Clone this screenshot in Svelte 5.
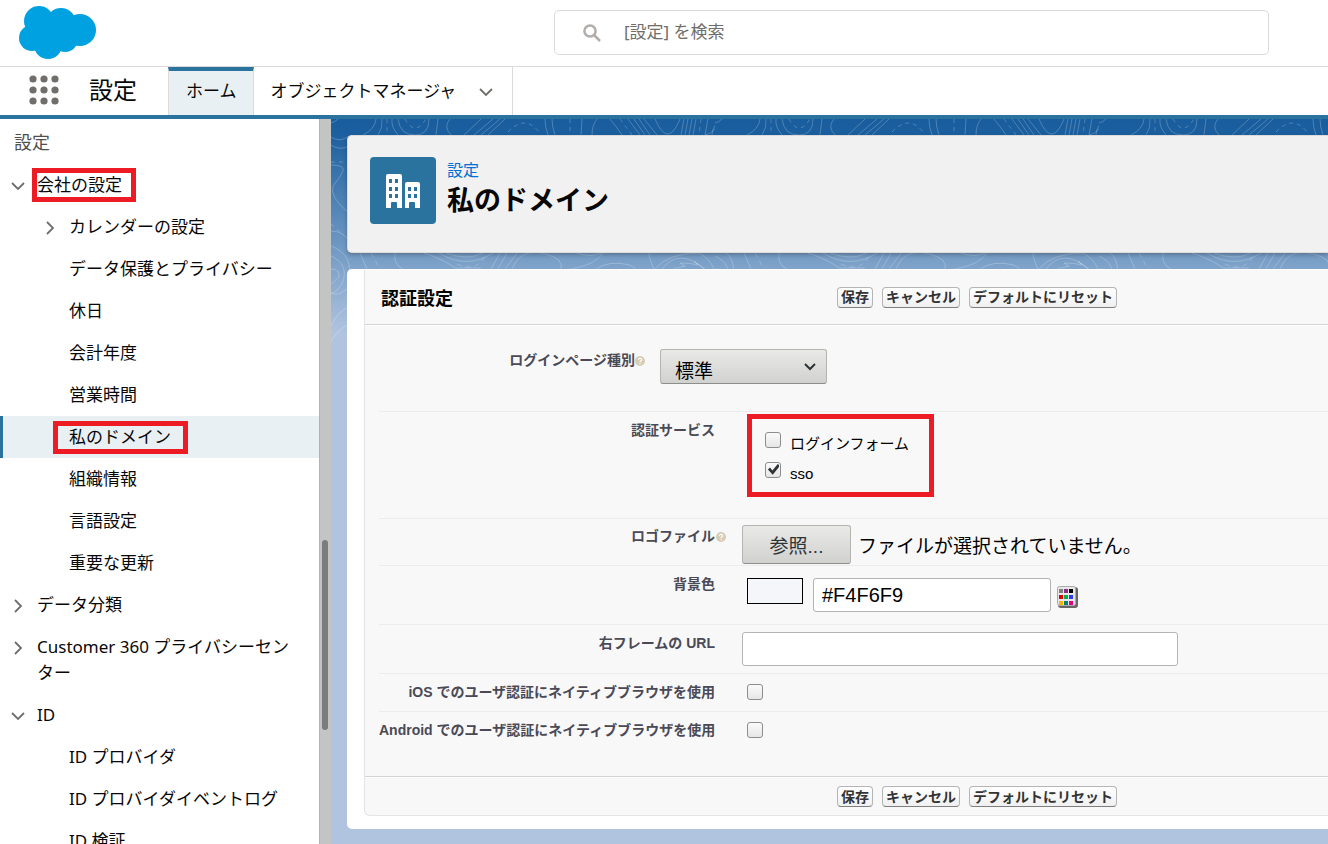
<script lang="ts">
  type NavItem = {
    label: string;
    level: 1 | 2;
    state?: 'open' | 'closed';
    current?: boolean;
    marked?: boolean;
  };

  const navItems: NavItem[] = [
    { label: '会社の設定', level: 1, state: 'open', marked: true },
    { label: 'カレンダーの設定', level: 2, state: 'closed' },
    { label: 'データ保護とプライバシー', level: 2 },
    { label: '休日', level: 2 },
    { label: '会計年度', level: 2 },
    { label: '営業時間', level: 2 },
    { label: '私のドメイン', level: 2, current: true, marked: true },
    { label: '組織情報', level: 2 },
    { label: '言語設定', level: 2 },
    { label: '重要な更新', level: 2 },
    { label: 'データ分類', level: 1, state: 'closed' },
    { label: 'Customer 360 プライバシーセンター', level: 1, state: 'closed' },
    { label: 'ID', level: 1, state: 'open' },
    { label: 'ID プロバイダ', level: 2 },
    { label: 'ID プロバイダイベントログ', level: 2 },
    { label: 'ID 検証', level: 2 },
  ];

  const dots = [5, 16, 27];
  const swatches = ['#808080', '#8b2a8b', '#000', '#e00000', '#00b050', '#2a3cff', '#ffb000', '#008080', '#e6007e'];

  let loginForm = $state(false);
  let sso = $state(true);
  let iosNative = $state(false);
  let androidNative = $state(false);
  let background = $state('#F4F6F9');
  let frameUrl = $state('');
</script>

{#snippet chevron(open: boolean)}
  <svg class="chevron" width="16" height="16" viewBox="0 0 16 16" aria-hidden="true">
    <path d={open ? 'M2 5l6 6 6-6' : 'M5 2l6 6-6 6'} />
  </svg>
{/snippet}

{#snippet help()}
  <svg class="help" width="10" height="10" viewBox="0 0 10 10" aria-hidden="true">
    <circle cx="5" cy="5" r="5" fill="#d8ccb4" />
    <path d="M3.4 3.8a1.6 1.4 0 1 1 2.4 1.2Q5 5.4 5 6.2M5 7.2v1" fill="none" stroke="#fff" stroke-width="1.2" />
  </svg>
{/snippet}

{#snippet actions()}
  <div class="actions">
    <button type="button">保存</button>
    <button type="button">キャンセル</button>
    <button type="button">デフォルトにリセット</button>
  </div>
{/snippet}

<div class="app">
  <header class="top">
    <svg class="logo" width="78" height="54" viewBox="0 0 78 54" aria-label="Salesforce">
      <g fill="#00a1e0">
        <circle cx="20" cy="15" r="15" />
        <circle cx="42" cy="17" r="15" />
        <circle cx="61" cy="24" r="16" />
        <circle cx="13" cy="32" r="13" />
        <circle cx="29" cy="39" r="14" />
        <circle cx="46" cy="33" r="13" />
        <path d="M12 18h42v18H12z" />
      </g>
    </svg>
    <label class="search">
      <svg width="18" height="18" viewBox="0 0 18 18" aria-hidden="true">
        <circle cx="7" cy="7" r="5.6" />
        <path d="M11 11l6 6" />
      </svg>
      <input type="search" placeholder="[設定] を検索" aria-label="[設定] を検索" />
    </label>
  </header>

  <nav class="bar">
    <button class="launcher" type="button" aria-label="アプリケーションランチャー">
      <svg width="32" height="32" viewBox="0 0 32 32">
        {#each dots as cy}
          {#each dots as cx}
            <circle {cx} {cy} r="3.6" />
          {/each}
        {/each}
      </svg>
    </button>
    <span class="app-name">設定</span>
    <a class="tab active" href="#home">ホーム</a>
    <a class="tab" href="#objects">オブジェクトマネージャ {@render chevron(true)}</a>
  </nav>

  <div class="body">
    <aside>
      <h2>設定</h2>
      <ul>
        {#each navItems as item}
          <li class:sub={item.level === 2} class:current={item.current}>
            <span class="toggle">
              {#if item.state}{@render chevron(item.state === 'open')}{/if}
            </span>
            <a href="#setup" class:marked={item.marked}>{item.label}</a>
          </li>
        {/each}
      </ul>
    </aside>
    <div class="track"><div class="thumb"></div></div>

    <main>
      <svg class="topography" width="100%" height="230" aria-hidden="true">
        <defs>
          <pattern id="contours" width="384" height="230" patternUnits="userSpaceOnUse">
            <g fill="none" stroke="#fff" stroke-opacity=".22">
              <path d="M0 4Q4 3 7 0M45 0Q44 10 32 16M51 0Q52 9 47 16M61 0Q60 8 67 16M67 0Q69 16 84 16Q98 16 98 0M107 0L105 16M119 0Q112 8 120 16" />
              <path d="M150 0L133 16M162 0L143 16M169 0L150 16M174 0L157 16M214 0Q214 8 217 16M221 0Q221 8 224 16M251 0L250 16M266 0Q261 6 261 16" />
              <path d="M279 0Q285 7 291 16M297 0L309 16M303 0L314 16M308 0L319 16M313 0L326 16M324 0Q337 30 349 0M353 0L350 16M357 0L354 16M361 0L358 16M365 0L362 16M377 0L374 16M392 0Q381 6 381 16M384 10Q380 15 374 16" />
              <path stroke-dasharray="4 4" d="M56 0V16M74 0Q84 18 95 0M177 13Q194-5 208 13M239 0V16M289 0L301 16M370 0L368 16" />
              <path d="M0 18Q9 24 18 17M0 26Q9 32 18 27M0 46Q14 46 12 52Q8 60 2 67Q-2 78 18 94M0 112Q12 112 18 122M0 127Q24 136 17 163M0 137Q19 146 11 165Q6 173 0 175M0 150Q9 150 8 158L0 165M18 168Q8 178 0 174M18 188Q8 191 0 207M18 205Q8 210 0 222" />
              <path stroke-dasharray="4 4" d="M0 43H18M0 105L12 116" />
              <path d="M29 134L36 150M64 134Q62 145 72 150M93 134Q112 140 124 149H150M108 134Q136 151 162 134M115 134Q137 142 152 134M169 134L160 150M176 134L167 150M186 134L174 150M181 150Q190 128 215 135Q233 140 230 150" />
              <path d="M240 150Q264 146 272 134M246 134Q260 139 270 134M265 150Q278 141 299 146L305 150M318 134Q318 140 323 150M324 150Q337 134 368 134Q379 140 383 150M331 150Q348 128 373 150" />
              <path d="M342 150l12-3-5-3q12 0 18 2l-4-4 11 8" />
              <path stroke-dasharray="5 4" d="M40 134L49 150M126 145Q145 154 154 137" />
            </g>
          </pattern>
        </defs>
        <rect width="100%" height="230" fill="url(#contours)" />
      </svg>

      <section class="page-head">
        <svg class="page-icon" width="66" height="67" viewBox="0 0 66 67" aria-hidden="true">
          <rect width="66" height="67" rx="4" fill="#2a739e" />
          <path fill="#fff" d="M18 17h12q2 0 2 2v32h-5v-5q0-1-1-1h-4q-1 0-1 1v5h-5V19q0-2 2-2zM37 25h11q2 0 2 2v24h-5v-5q0-1-1-1h-4q-1 0-1 1v5h-4V27q0-2 2-2z" />
          <path fill="#2a739e" d="M19 22h3v4h-3zM25 22h3v4h-3zM19 30h3v4h-3zM25 30h3v4h-3zM19 37h3v4h-3zM25 37h3v4h-3zM38 30h3v4h-3zM44 30h3v4h-3zM38 37h3v4h-3zM44 37h3v4h-3z" />
        </svg>
        <div>
          <a href="#setup">設定</a>
          <h1>私のドメイン</h1>
        </div>
      </section>

      <section class="panel">
        <form class="block">
          <div class="block-head">
            <h3>認証設定</h3>
            {@render actions()}
          </div>
          <div class="fields">
            <div class="row type">
              <div class="name"><label for="page-type">ログインページ種別</label>{@render help()}</div>
              <div class="select">
                <select id="page-type"><option>標準</option></select>
                <svg width="12" height="8" viewBox="0 0 12 8" aria-hidden="true"><path d="M1 1l5 5 5-5" /></svg>
              </div>
            </div>
            <div class="row services">
              <div class="name" id="services">認証サービス</div>
              <div class="checks" role="group" aria-labelledby="services">
                <label><input type="checkbox" bind:checked={loginForm} />ログインフォーム</label>
                <label><input type="checkbox" bind:checked={sso} />sso</label>
              </div>
            </div>
            <div class="row logo-file">
              <div class="name" id="logo-file">ロゴファイル<span class="hint">{@render help()}</span></div>
              <div class="value">
                <button type="button" class="browse" aria-describedby="logo-file">参照...</button>
                <span class="file">ファイルが選択されていません。</span>
              </div>
            </div>
            <div class="row color">
              <div class="name"><label for="background">背景色</label></div>
              <div class="value">
                <span class="swatch" style="background: {background}"></span>
                <input id="background" type="text" bind:value={background} />
                <button type="button" class="picker" aria-label="色を選択">
                  <svg width="21" height="22" viewBox="0 0 21 22">
                    <rect x="1" y="1" width="20" height="21" rx="3" fill="#666" />
                    <rect x=".5" y=".5" width="18" height="19" rx="2" fill="#e8e8e8" stroke="#aaa" />
                    {#each swatches as fill, i}
                      <rect x={2 + (i % 3) * 5} y={3 + Math.floor(i / 3) * 6} width="4" height="4" {fill} />
                    {/each}
                  </svg>
                </button>
              </div>
            </div>
            <div class="row url">
              <div class="name"><label for="frame-url">右フレームの URL</label></div>
              <div class="value"><input id="frame-url" type="text" bind:value={frameUrl} /></div>
            </div>
            <div class="row ios">
              <div class="name"><label for="ios">iOS でのユーザ認証にネイティブブラウザを使用</label></div>
              <div class="value"><input id="ios" type="checkbox" bind:checked={iosNative} /></div>
            </div>
            <div class="row android">
              <div class="name"><label for="android">Android でのユーザ認証にネイティブブラウザを使用</label></div>
              <div class="value"><input id="android" type="checkbox" bind:checked={androidNative} /></div>
            </div>
          </div>
          <div class="block-foot">{@render actions()}</div>
        </form>
      </section>
    </main>
  </div>
</div>

<style>
  :global(body) {
    margin: 0;
  }
  .app {
    height: 100vh;
    display: flex;
    flex-direction: column;
    overflow: hidden;
    background: #fff;
    color: #080707;
    font-family: 'Noto Sans', 'Noto Sans CJK JP', sans-serif;
    font-size: 17px;
  }
  .app * {
    box-sizing: border-box;
  }
  a {
    color: inherit;
    text-decoration: none;
  }
  button,
  input,
  select {
    margin: 0;
    font: inherit;
    color: inherit;
  }
  button {
    cursor: pointer;
  }
  .chevron {
    display: block;
    flex: none;
    fill: none;
    stroke: #706e6b;
    stroke-width: 1.8;
  }

  .top {
    flex: none;
    display: flex;
    align-items: flex-start;
    justify-content: space-between;
    height: 67px;
    padding: 0 59px 0 19px;
    border-bottom: 1px solid #dddbda;
  }
  .logo {
    flex: none;
    margin-top: 6px;
  }
  .search {
    flex: 0 1 715px;
    display: flex;
    align-items: center;
    height: 45px;
    margin-top: 10px;
    padding: 0 28px;
    border: 1px solid #dddbda;
    border-radius: 5px;
  }
  .search svg {
    flex: none;
    fill: none;
    stroke: #b0adab;
    stroke-width: 2.5;
  }
  .search input {
    flex: 1;
    min-width: 0;
    height: 40px;
    margin: 0 0 2px 23px;
    padding: 0;
    border: 0;
    outline: 0;
    background: none;
  }
  .search input::placeholder {
    color: #706e6b;
    opacity: 1;
  }

  .bar {
    flex: none;
    display: flex;
    height: 52px;
    border-bottom: 4px solid #2a739e;
  }
  .launcher {
    display: flex;
    align-items: flex-start;
    width: 89px;
    padding: 7px 0 0 28px;
    border: 0;
    background: none;
  }
  .launcher svg {
    fill: #706e6b;
  }
  .app-name {
    width: 79px;
    font-size: 24px;
    line-height: 46px;
  }
  .tab {
    display: flex;
    align-items: center;
    padding: 0 16px 0 17px;
    border-right: 1px solid #dddbda;
    line-height: 46px;
  }
  .tab.active {
    border-top: 4px solid #2a739e;
    border-left: 1px solid #dddbda;
    background: #e8f0f3;
    line-height: 40px;
    align-items: flex-start;
  }
  .tab .chevron {
    margin: 2px 2px 0 22px;
  }

  .body {
    flex: 1;
    min-height: 0;
    display: flex;
  }
  aside {
    flex: 0 0 319px;
    overflow: hidden;
  }
  aside h2 {
    height: 45px;
    margin: 0;
    padding-left: 14px;
    color: #514f4d;
    font-size: 18px;
    font-weight: 400;
    line-height: 47px;
  }
  aside ul {
    margin: 0;
    padding: 0;
    list-style: none;
  }
  aside li {
    display: flex;
    align-items: flex-start;
    padding: 8px 20px 8px 7px;
    border-left: 3px solid transparent;
    line-height: 26px;
  }
  aside li.sub {
    padding-left: 39px;
  }
  aside li.current {
    border-color: #2a739e;
    background: #e8f0f3;
  }
  .toggle {
    flex: 0 0 27px;
    padding-top: 6px;
  }
  aside a {
    position: relative;
  }
  /* callout frame around a menu entry */
  aside a.marked::after {
    content: '';
    position: absolute;
    inset: -4px -14px -4px -5px;
    border: 5px solid #ed1c24;
  }
  .sub a.marked::after {
    inset: -3px -17px -4px -16px;
  }
  .track {
    flex: 0 0 12px;
    position: relative;
    border-left: 1px solid #b0b3b2;
    background: #c2c5c4;
  }
  .thumb {
    position: absolute;
    top: 58%;
    left: 2px;
    width: 6px;
    height: 190px;
    border-radius: 3px;
    background: #7b7c7c;
  }

  main {
    flex: 1;
    min-width: 0;
    position: relative;
    padding: 16px 0 0 16px;
    overflow: hidden;
    background: #b0c4df linear-gradient(#195d9e, #1b5f9f 14px, #b0c4df 214px) no-repeat 0 0 / 100% 214px;
  }
  .topography {
    position: absolute;
    top: 0;
    left: 0;
  }
  .page-head {
    position: relative;
    display: flex;
    align-items: flex-start;
    gap: 11px;
    height: 118px;
    padding: 21px 22px;
    border: 1px solid #dddbda;
    border-right: 0;
    border-radius: 5px 0 0 5px;
    background: #f1f1f1;
    box-shadow: 0 2px 4px rgba(0, 0, 0, 0.25);
  }
  .page-icon {
    flex: none;
  }
  .page-head a {
    display: block;
    color: #0070d2;
    font-size: 16px;
    line-height: 26px;
  }
  h1 {
    margin: 0;
    font-size: 27px;
    font-weight: 700;
    line-height: 34px;
  }
  .panel {
    position: relative;
    margin-top: 16px;
    padding: 1px 0 13px 17px;
    border-radius: 5px 0 0 5px;
    background: #fff;
  }
  .block {
    border: solid #e4e4e4;
    border-width: 0 0 1px 1px;
    border-radius: 0 0 0 6px;
    background: #f8f8f8;
    color: #000;
    font-family: 'Liberation Sans', 'Noto Sans CJK JP', sans-serif;
  }
  .block-head {
    display: flex;
    align-items: center;
    height: 55px;
    padding-left: 16px;
    border-bottom: 1px solid #d4d4d4;
  }
  h3 {
    flex: 0 0 456px;
    margin: 0;
    padding-top: 4px;
    font-size: 18px;
    line-height: 26px;
  }
  .actions {
    display: flex;
    gap: 9px;
  }
  .actions button {
    height: 21px;
    padding: 0 3px;
    border: 1px solid #b5b5b5;
    border-bottom-color: #7f7f7f;
    border-radius: 4px;
    background: linear-gradient(#fff, #f0f0f0);
    color: #333;
    font-size: 14px;
    font-weight: 700;
    line-height: 18px;
    white-space: nowrap;
  }
  .block-foot {
    height: 39px;
    padding: 9px 0 0 472px;
    border-top: 1px solid #d4d4d4;
    box-shadow: inset 0 1px #fff;
  }

  .fields {
    padding: 0 0 26px 14px;
    box-shadow: inset 0 1px #fff;
  }
  .row {
    display: flex;
    align-items: flex-start;
    border-top: 1px solid #ececec;
  }
  .name {
    flex: 0 0 336px;
    color: #4a4a56;
    font-size: 14px;
    font-weight: 700;
    line-height: 20px;
    text-align: right;
    white-space: nowrap;
  }
  .value {
    display: flex;
    align-items: flex-start;
    margin-left: 27px;
  }
  .help {
    vertical-align: -1px;
  }
  .hint {
    position: absolute;
    margin-left: 1px;
  }
  .row.type {
    height: 86px;
    padding-top: 24px;
    border-top: 0;
  }
  .type .name {
    flex-basis: 266px;
    padding-top: 1px;
  }
  .select {
    position: relative;
    margin-left: 15px;
  }
  select {
    display: block;
    width: 167px;
    height: 35px;
    padding: 8px 14px 0;
    appearance: none;
    border: 1px solid #b4b4b0;
    border-bottom-color: #8b8e8b;
    border-radius: 3px;
    background: linear-gradient(#e9e9e7, #d1d1cf);
    font-size: 19px;
    line-height: 28px;
  }
  .select svg {
    position: absolute;
    top: 14px;
    right: 11px;
    fill: none;
    stroke: #2e3436;
    stroke-width: 2;
    pointer-events: none;
  }
  .services {
    height: 107px;
    padding-top: 2px;
  }
  .services .name {
    padding-top: 6px;
  }
  .checks {
    display: flex;
    flex-direction: column;
    gap: 8px;
    height: 83px;
    margin-left: 32px;
    padding: 13px 20px 0 13px;
    border: 5px solid #ed1c24;
    font-size: 15px;
    line-height: 20px;
  }
  .checks label {
    display: flex;
    align-items: flex-end;
    gap: 9px;
    height: 22px;
    white-space: nowrap;
  }
  .checks input {
    align-self: flex-start;
  }
  input[type='checkbox'] {
    flex: none;
    display: block;
    width: 16px;
    height: 16px;
    appearance: none;
    border: 1px solid #8b8e8b;
    border-radius: 3px;
    background: linear-gradient(#fbfbfb, #e6e6e6);
  }
  input[type='checkbox']:checked::before {
    content: '';
    display: block;
    width: 12px;
    height: 12px;
    margin: 1px;
    background: #2e3436;
    clip-path: polygon(8% 45%, 25% 30%, 45% 55%, 90% 0, 100% 8%, 100% 25%, 48% 90%);
  }
  .logo-file {
    height: 47px;
    padding-top: 6px;
  }
  .logo-file .name {
    padding-top: 1px;
  }
  .browse {
    width: 109px;
    height: 39px;
    padding: 4px 0 0;
    border: 1px solid #b4b4b0;
    border-bottom-color: #8b8e8b;
    border-radius: 3px;
    background: linear-gradient(#e9e9e7, #d1d1cf);
    color: #2e3436;
    font-size: 19px;
    line-height: 28px;
  }
  .file {
    margin-left: 7px;
    font-size: 19px;
    line-height: 43px;
    height: 39px;
    white-space: nowrap;
  }
  .color {
    height: 59px;
    padding-top: 12px;
  }
  .color .name {
    line-height: 12px;
  }
  .swatch {
    width: 56px;
    height: 26px;
    margin: 0 10px 0 5px;
    border: 1px solid #000;
  }
  input[type='text'] {
    width: 238px;
    height: 34px;
    padding: 0 8px;
    border: 1px solid #b4b4b0;
    border-radius: 3px;
    background: #fff;
    font-size: 20px;
  }
  .picker {
    margin: 8px 0 0 6px;
    padding: 0;
    border: 0;
    background: none;
  }
  .picker svg {
    display: block;
  }
  .url {
    height: 49px;
    padding-top: 7px;
  }
  .url .name {
    padding-top: 1px;
  }
  .url input[type='text'] {
    width: 436px;
  }
  .ios,
  .android {
    height: 38px;
    padding-top: 8px;
  }
  .android {
    height: 39px;
  }
  .ios .value,
  .android .value {
    margin-left: 32px;
    padding-top: 2px;
  }
</style>
